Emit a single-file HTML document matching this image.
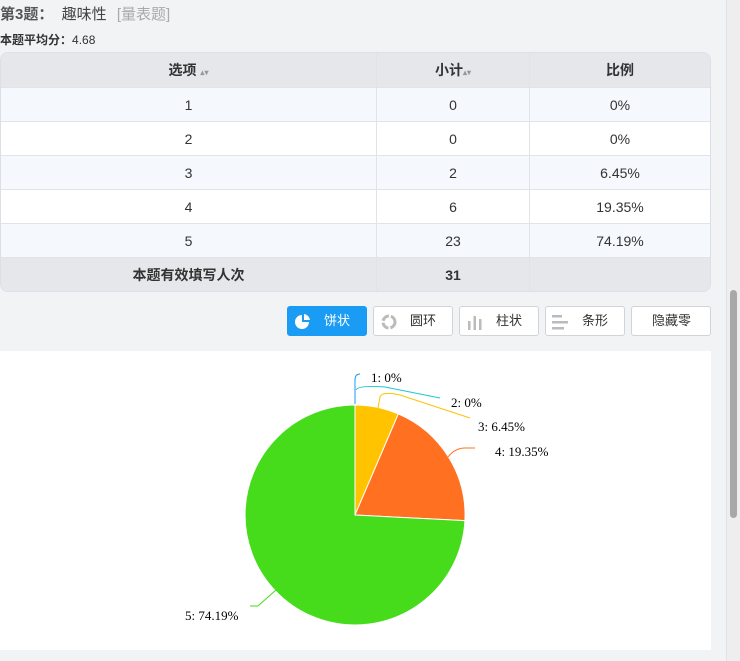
<!DOCTYPE html>
<html><head><meta charset="utf-8"><style>
*{margin:0;padding:0;box-sizing:border-box}
body{width:740px;height:661px;overflow:hidden;background:#f2f3f5;font-family:"Liberation Sans","Noto Sans CJK SC",sans-serif;color:#333;position:relative}
.t{position:absolute;left:0;top:3px;font-size:15px;color:#444}
.t b{color:#555}
.t .g{color:#aaa;margin-left:6px}
.avg{position:absolute;left:0;top:31px;font-size:12px;color:#333}
table{position:absolute;left:0;top:52px;width:711px;border-collapse:separate;border-spacing:0;border:1px solid #dcdfe6;border-radius:8px;overflow:hidden;font-size:14px}
td,th{text-align:center;border-right:1px solid #e0e3e8;border-bottom:1px solid #e0e3e8;height:34px}
td:last-child,th:last-child{border-right:none}
tr:last-child td{border-bottom:none}
th{background:#e5e7eb;font-weight:bold;height:35px;color:#333}
tr.a td{background:#f5f8fc}
tr.b td{background:#fff}
tr.f td{background:#e5e7eb;font-weight:bold;height:33px}
.s{font-size:8px;color:#999}
.btn{position:absolute;top:306px;height:30px;width:80px;border:1px solid #d0d3d8;border-radius:3px;background:#fff;font-size:13px;line-height:28px;color:#333}
.btn span{position:absolute;left:36px}
.btn svg{position:absolute;left:6px;top:6px}
.chart{position:absolute;left:0;top:351px;width:711px;height:299px;background:#fff}
.sb{position:absolute;left:726px;top:0;width:14px;height:661px;background:#eeeeee;border-left:1px solid #e2e2e2}
.th{position:absolute;left:730px;top:290px;width:7px;height:228px;background:#a8a8a8;border-radius:4px}
</style></head><body>
<div class="t"><b>第3题：</b>&nbsp;&nbsp;趣味性 <span class="g">[量表题]</span></div>
<div class="avg"><b>本题平均分：</b>4.68</div>
<table>
<tr><th style="width:376px">选项 <span class="s">▴▾</span></th><th style="width:153px">小计<span class="s">▴▾</span></th><th>比例</th></tr>
<tr class="a"><td>1</td><td>0</td><td>0%</td></tr>
<tr class="b"><td>2</td><td>0</td><td>0%</td></tr>
<tr class="a"><td>3</td><td>2</td><td>6.45%</td></tr>
<tr class="b"><td>4</td><td>6</td><td>19.35%</td></tr>
<tr class="a"><td>5</td><td>23</td><td>74.19%</td></tr>
<tr class="f"><td>本题有效填写人次</td><td>31</td><td></td></tr>
</table>
<div class="btn" style="left:287px;background:#1a9cf5;border-color:#1a9cf5;color:#fff"><svg width="18" height="18" viewBox="0 0 18 18"><path d="M8 2A7 7 0 1 0 15 9H8Z" fill="#fff"/><path d="M10 1A7 7 0 0 1 16 7H10Z" fill="#fff"/></svg><span>饼状</span></div>
<div class="btn" style="left:373px"><svg width="18" height="18" viewBox="0 0 18 18"><circle cx="9" cy="9" r="6" fill="none" stroke="#bbb" stroke-width="3" stroke-dasharray="8 2"/></svg><span>圆环</span></div>
<div class="btn" style="left:459px"><svg width="18" height="18" viewBox="0 0 18 18"><rect x="2" y="8" width="2.5" height="9" fill="#bbb"/><rect x="7.5" y="3" width="2.5" height="14" fill="#bbb"/><rect x="13" y="6" width="2.5" height="11" fill="#bbb"/></svg><span>柱状</span></div>
<div class="btn" style="left:545px"><svg width="18" height="18" viewBox="0 0 18 18"><rect x="0" y="2" width="10" height="2.5" fill="#bbb"/><rect x="0" y="8" width="16" height="2.5" fill="#bbb"/><rect x="0" y="14" width="12" height="2.5" fill="#bbb"/></svg><span>条形</span></div>
<div class="btn" style="left:631px"><span style="left:20px">隐藏零</span></div>
<div class="chart">
<svg width="711" height="299" viewBox="0 351 711 299" style="font-family:'Liberation Serif',serif;font-size:13px">
<path d="M355 515L355 405A110 110 0 0 1 398.3 413.9Z" fill="#ffc300" stroke="#fff"/>
<path d="M355 515L398.3 413.9A110 110 0 0 1 464.9 520.6Z" fill="#ff7020" stroke="#fff"/>
<path d="M355 515L464.9 520.6A110 110 0 1 1 355 405Z" fill="#46dc1c" stroke="#fff"/>
<line x1="355" y1="405" x2="355" y2="515" stroke="#fff"/>
<path d="M355 404V380Q355 374 360 374" fill="none" stroke="#1a9cf5"/>
<path d="M356 390Q358 385 385 387L440 398" fill="none" stroke="#1ac8d4"/>
<path d="M378 408L380 397Q382 391 400 395L470 418" fill="none" stroke="#ffc300"/>
<path d="M448 457Q455 448 465 448H475" fill="none" stroke="#ff7020"/>
<path d="M276 590L258 606H250" fill="none" stroke="#46dc1c"/>
<text x="371" y="382">1: 0%</text>
<text x="451" y="407">2: 0%</text>
<text x="478" y="431">3: 6.45%</text>
<text x="495" y="456">4: 19.35%</text>
<text x="185" y="620">5: 74.19%</text>
</svg>
</div>
<div class="sb"></div><div class="th"></div>
</body></html>
